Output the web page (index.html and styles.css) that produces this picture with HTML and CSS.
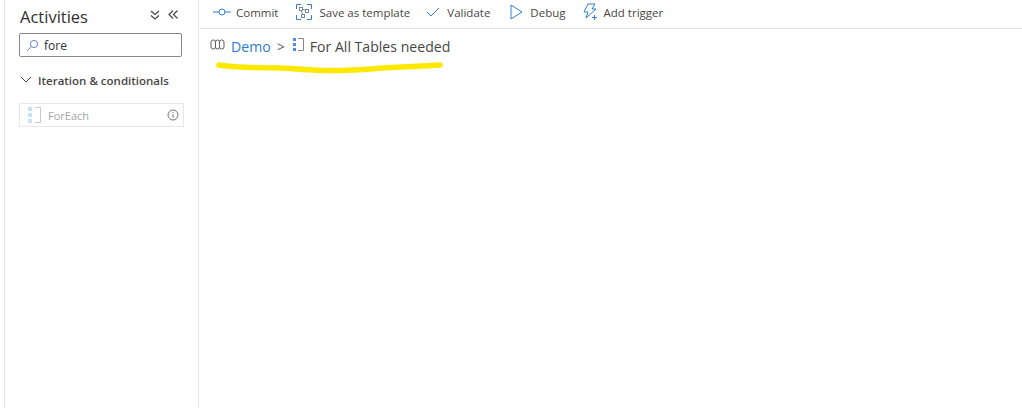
FILE: index.html
```html
<!DOCTYPE html>
<html lang="en">
<head>
<meta charset="utf-8">
<title>Pipeline</title>
<link rel="stylesheet" href="styles.css">
</head>
<body>
<div class="app">
  <aside class="side">
    <div class="side-head">
      <h1 class="title">Activities</h1>
      <svg class="dbl" width="12" height="12" viewBox="0 0 12 12"><path d="M2 2l4 3.500L10 2M2 6.500l4 3.500 4-3.500"/></svg>
      <svg class="dbl dbl-l" width="12" height="12" viewBox="0 0 12 12"><path d="M6 1.500L2 5.500l4 4M10.500 1.500l-4 4 4 4"/></svg>
    </div>
    <div class="search">
      <svg width="13" height="13" viewBox="0 0 13 13"><circle cx="8" cy="5" r="3.600"/><path d="M5.400 7.600L1 12"/></svg>
      <span>fore</span>
    </div>
    <div class="group">
      <svg width="12" height="8" viewBox="0 0 12 8"><path d="M1 1l5 5 5-5"/></svg>
      <span>Iteration &amp; conditionals</span>
    </div>
    <div class="item">
      <svg width="14" height="18" viewBox="0 0 14 18"><rect class="b1" x="0" y="1" width="4" height="4"/><rect class="b1" x="0" y="7" width="4" height="4"/><rect class="b1" x="0" y="13" width="4" height="4"/><path class="g1" d="M7 1.500h5.500v15H7"/></svg>
      <span class="item-name">ForEach</span>
      <svg class="info" width="12" height="12" viewBox="0 0 12 12"><circle cx="6" cy="6" r="5"/><path d="M6 5.200v3.600M6 3v1.200"/></svg>
    </div>
  </aside>
  <main class="main">
    <nav class="bar">
      <div class="tool t-commit"><svg width="18" height="8" viewBox="0 0 18 8"><circle cx="9" cy="4" r="3"/><path d="M0 4h6M12 4h6"/></svg><span>Commit</span></div>
      <div class="tool t-save"><svg width="16" height="16" viewBox="0 0 16 16"><path d="M.5 5V.5h4.500M11 .5h4.500V5M15.500 11v4.500H11M5 15.500H.5V11"/><rect x="3.500" y="3.500" width="3" height="3" class="g"/><rect x="9.500" y="5.500" width="3" height="3" class="g"/><rect x="5.500" y="10.500" width="3" height="3" class="g"/><path class="g" d="M6.500 5l3 1.500M5.500 6.500l1 4"/></svg><span>Save as template</span></div>
      <div class="tool t-val"><svg width="14" height="10" viewBox="0 0 14 10"><path d="M1 5l4 4 8-8"/></svg><span>Validate</span></div>
      <div class="tool t-debug"><svg width="13" height="16" viewBox="0 0 13 16"><path d="M1 1l11 7-11 7z"/></svg><span>Debug</span></div>
      <div class="tool t-trig"><svg width="15" height="18" viewBox="0 0 15 18"><path d="M5 1h7L9 6h4L3 15l2-6H1z"/><path d="M11.500 12v5M9 14.500h5"/></svg><span>Add trigger</span></div>
    </nav>
    <div class="crumbs">
      <svg class="book" width="15" height="11" viewBox="0 0 15 11"><rect x="1" y="1" width="4.500" height="9" rx="2"/><rect x="5.500" y="1" width="4" height="9" rx="2"/><rect x="9.500" y="1" width="4.500" height="9" rx="2"/></svg>
      <a class="link">Demo</a>
      <span class="sep">&gt;</span>
      <svg class="fe" width="11" height="13" viewBox="0 0 11 13"><rect x="0" y="0" width="3" height="3"/><rect x="0" y="5" width="3" height="3"/><rect x="0" y="10" width="3" height="3"/><path d="M5 .500h5.500v12H5"/></svg>
      <span class="name">For All Tables needed</span>
    </div>
    <svg class="mark" width="232" height="16" viewBox="0 0 232 16"><path d="M3 4C30 8 50 6 75 7.500c30 2.500 50 3 85 0 25-2 45-2 64-3.500"/></svg>
  </main>
</div>
</body>
</html>
```
FILE: styles.css
```css
* { box-sizing: border-box; }
html, body { margin: 0; height: 100%; background: #fff; overflow: hidden; }
body { font-family: "Open Sans", "Noto Sans", sans-serif; color: #484644; }
svg { display: block; flex: none; fill: none; }
.app { display: flex; height: 408px; padding-left: 4px; }
.side { width: 195px; border-left: 1px solid #e6e6e6; border-right: 1px solid #e6e6e6; padding: 0 14px; }
.side-head { display: flex; align-items: center; height: 33px; }
.title { margin: 0; font-size: 16.500px; font-weight: 500; color: #323130; flex: 1; margin-left: 1px; }
.dbl { stroke: #484644; stroke-width: 1.200; margin-right: 6px; margin-top: -4px; }
.dbl-l { margin-right: 5px; }
.search { display: flex; align-items: center; gap: 5px; width: 163px; height: 24px; border: 1px solid #8a8886; border-radius: 2px; padding-left: 6px; font-size: 12px; color: #323130; }
.search svg { stroke: #6f7fd6; stroke-width: 1; }
.group { display: flex; align-items: center; gap: 6px; margin-top: 15px; margin-left: 1px; height: 16px; font-size: 11.500px; font-weight: 600; color: #484644; }
.group svg { stroke: #484644; stroke-width: 1; }
.item { display: flex; align-items: center; width: 165px; height: 24px; margin-top: 15px; border: 1px solid #e8e8e8; padding: 0 4px 0 8px; font-size: 11px; color: #a6a6a6; }
.item-name { flex: 1; margin-left: 6px; }
.b1 { fill: #c7e0f4; }
.g1 { stroke: #c8c8c8; }
.info { stroke: #767676; stroke-width: 1; }
.main { flex: 1; position: relative; }
.bar { display: flex; align-items: center; height: 29px; border-bottom: 1px solid #e6e6e6; padding: 0 0 4px 14px; gap: 16px; font-size: 11.500px; color: #484644; }
.tool { display: flex; align-items: center; gap: 7px; }
.tool svg { stroke: #2f7fd0; stroke-width: 1; }
.tool svg .g { stroke: #7a8a99; }
.t-commit { gap: 5px; }
.t-save { gap: 7px; margin-left: 2px; }
.t-debug { gap: 7px; margin-left: 4px; }
.t-trig { gap: 6px; margin-left: 1px; }
.crumbs { display: flex; align-items: center; height: 34px; padding-left: 11px; font-size: 14.100px; }
.book { stroke: #605e5c; stroke-width: 1; margin-top: -3px; }
.link { color: #2b7cd3; margin-left: 6px; }
.sep { margin-left: 6px; color: #605e5c; }
.fe { margin-left: 8px; margin-top: -3px; }
.fe rect { fill: #4a90d9; }
.fe path { stroke: #8a8886; }
.name { margin-left: 6px; color: #484644; }
.mark { position: absolute; left: 17px; top: 61px; stroke: #ffe800; stroke-width: 5.500; stroke-linecap: round; }
```
